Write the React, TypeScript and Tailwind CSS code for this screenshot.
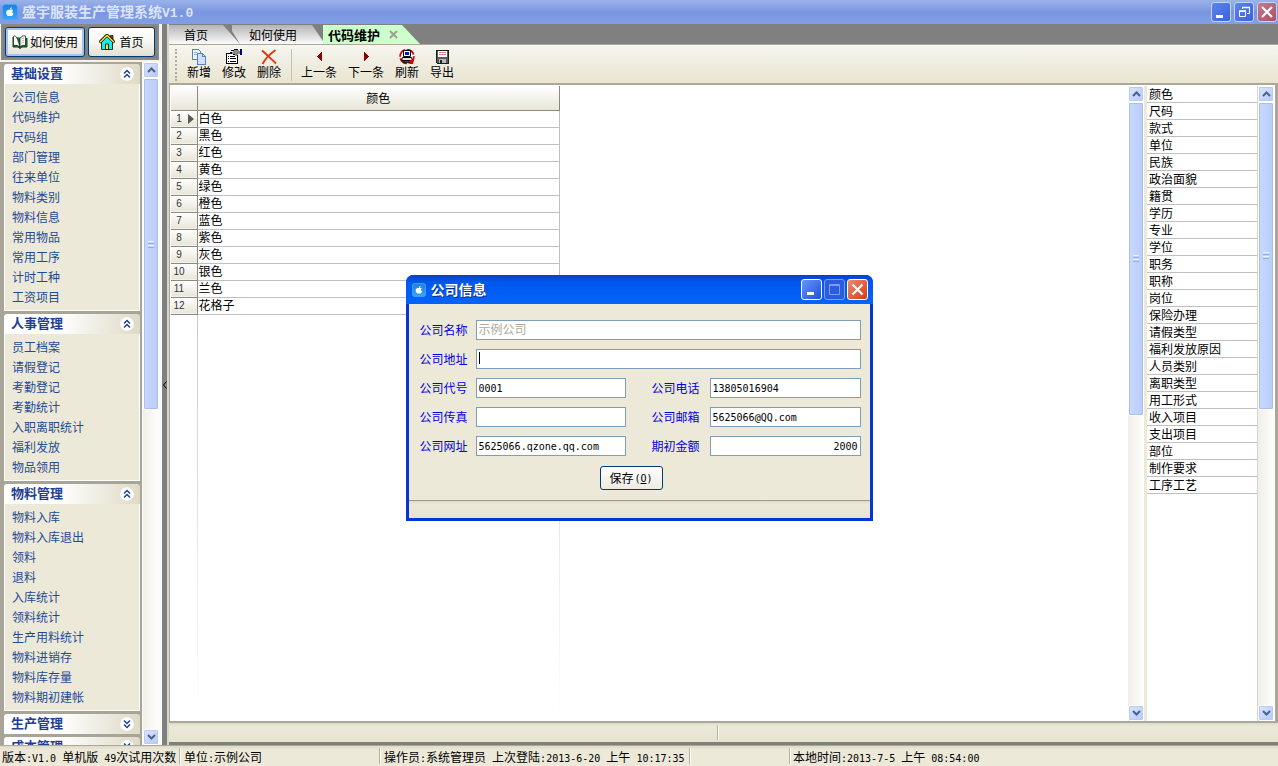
import React from 'react';

const MONO = "font-['DejaVu_Sans_Mono','Noto_Sans_CJK_SC',monospace] text-[10px]";

/* Sets Latin runs in a narrow monospace beside 12px Chinese characters. */
function Mixed({ text }: { text: string }) {
  const parts = text.match(/[\x20-\x7e]+|[^\x20-\x7e]+/g) ?? [];
  return (
    <span className="whitespace-pre">
      {parts.map((p, i) =>
        /^[\x20-\x7e]/.test(p) ? (
          <span key={i} className={MONO}>{p}</span>
        ) : (
          <React.Fragment key={i}>{p}</React.Fragment>
        ),
      )}
    </span>
  );
}

function AppIcon({ className }: { className: string }) {
  return (
    <svg viewBox="0 0 16 16" className={className} aria-hidden="true">
      <defs>
        <linearGradient id="appIcon" x1="0" y1="0" x2="0" y2="1">
          <stop offset="0" stopColor="#1c7fe0" />
          <stop offset="1" stopColor="#35a6f8" />
        </linearGradient>
      </defs>
      <rect x="0.5" y="0.5" width="15" height="15" rx="3" fill="url(#appIcon)" stroke="#4aa5f2" />
      <path
        d="M8 6c1-.8 2.400-.6 3.100.4-1.200.8-1.100 2.600.3 3.200-.4 1.200-1.100 2.400-2 2.400-.6 0-.8-.3-1.500-.3s-.9.3-1.500.3C5.200 12 4.200 10 4.200 8.400 4.200 6.300 6 5.200 8 6zM7.900 5.600c0-1.300.8-2.200 1.900-2.300.1 1.200-.8 2.200-1.900 2.300z"
        fill="#fff"
      />
    </svg>
  );
}

type IconProps = { name: string };

function ToolIcon({ name }: IconProps) {
  return (
    <svg viewBox="0 0 16 16" className="size-4 shrink-0" aria-hidden="true" shapeRendering="crispEdges">
      {name === 'new' && (
        <g fill="#eaf2ff" stroke="#5b7fc0">
          <path d="M1.500.5h6l2 2v8h-8z" />
          <path d="M3 3.500h3M3 5.500h3" stroke="#9bb5e0" />
          <path d="M6.500 4.500h5l3 3v8h-8z" fill="#cfe0fa" />
          <path d="M11.500 4.500v3h3" fill="none" />
        </g>
      )}
      {name === 'edit' && (
        <g>
          <path d="M.5 4.500h11v10H.5z" fill="#fff" stroke="#000" />
          <path d="M2 7.500h1M4 7.500h5M2 9.500h1M4 9.500h6M2 12.500h1M4 12.500h6" stroke="#000" />
          <path d="M5 1h7l2 1v3h-2l-1 2H9L7 5 4 4V3h3z" fill="#8a8a8a" />
          <path d="M5 1.500h3M8 .5h4M4 3.500h2M7 5.500h2" stroke="#000" />
          <path d="M14 0h2v6h-2z" fill="#000080" />
        </g>
      )}
      {name === 'delete' && (
        <path
          d="M1 1.500C5 5 10 10 15 14.500M14.500 1C9 5 4 10 1.500 15"
          stroke="#e8320c"
          strokeWidth="1.800"
          fill="none"
          shapeRendering="auto"
        />
      )}
      {name === 'prev' && <path d="M11 3v9L6 7.500z" fill="#8b0000" />}
      {name === 'next' && <path d="M6 3v9l5-4.500z" fill="#8b0000" />}
      {name === 'refresh' && (
        <g shapeRendering="auto">
          <circle cx="8" cy="7.500" r="6.800" fill="#fff" stroke="#d80000" strokeWidth="1.800" strokeDasharray="9 1.500" />
          <path d="M4.500 1.500h7v6h-7z" fill="#fff" stroke="#000" />
          <path d="M6 3h4v3H6z" fill="#0018c8" />
          <path d="M3.500 8.500h9l1 3h-11z" fill="#ddd" stroke="#000" />
          <path d="M4 13h7" stroke="#000" strokeWidth="1.500" />
          <path d="M11 11h4l-1 4h-3z" fill="#d80000" />
        </g>
      )}
      {name === 'export' && (
        <g>
          <path d="M2.500 1.500h12v13h-11l-1-1z" fill="#5a5a5a" stroke="#1c1c1c" />
          <path d="M4 2h9v6H4z" fill="#fff" />
          <path d="M5 3.500h7M5 5.500h7" stroke="#e08080" />
          <path d="M5 10h7v4H5z" fill="#b8b8b8" />
          <path d="M6 11h2v3H6z" fill="#222" />
        </g>
      )}
    </svg>
  );
}

function BookIcon() {
  return (
    <svg viewBox="0 0 16 16" className="size-4" aria-hidden="true">
      <path d="M1 3v10h5l2 1.500 2-1.500h5V4" fill="#0a7a1c" stroke="#064d10" />
      <path d="M1.500 2.500C3 1 5 1.500 8 13 6 11.500 4 11 1.500 11.500z" fill="#fff" stroke="#222" strokeWidth=".8" />
      <path d="M8 13V4.500C9.500 2 11.500 1.500 13.500 2v9.500C11 11 9.500 11.500 8 13z" fill="#fff" stroke="#222" strokeWidth=".8" />
      <path d="M9.500 5l2.500-.8M9.500 7l2.500-.8M9.500 9l2.500-.8" stroke="#999" strokeWidth=".7" />
    </svg>
  );
}

function HomeIcon() {
  return (
    <svg viewBox="0 0 16 16" className="size-4" aria-hidden="true">
      <path d="M11.500 1.500h2.500v5l-2.500-2z" fill="#e02020" stroke="#000" strokeWidth=".7" />
      <path d="M2.500 8v7.500h11V8L8 2.500z" fill="#18e8f0" stroke="#000" strokeWidth=".8" />
      <path d="M.5 8.500L8 1l7.500 7.500" fill="none" stroke="#000" strokeWidth="2.800" />
      <path d="M1 8.300L8 1.400l7 6.900" fill="none" stroke="#f0e020" strokeWidth="1.600" />
      <path d="M6.500 10h3v5.500h-3z" fill="#ffe020" stroke="#000" strokeWidth=".8" />
    </svg>
  );
}

function Chevrons({ down = false }: { down?: boolean }) {
  return (
    <svg viewBox="0 0 14 14" className="size-[14px]" aria-hidden="true">
      <circle cx="7" cy="7" r="6.800" fill="#fff" />
      <path
        d={down ? 'M4 3.500l3 3 3-3M4 7.500l3 3 3-3' : 'M4 6.500l3-3 3 3M4 10.500l3-3 3 3'}
        fill="none"
        stroke="#1f4092"
        strokeWidth="1.500"
      />
    </svg>
  );
}

function ScrollButton({ down = false }: { down?: boolean }) {
  return (
    <button
      type="button"
      aria-label={down ? '向下滚动' : '向上滚动'}
      className="flex h-4 w-full shrink-0 items-center justify-center rounded-[2px] border border-white bg-linear-to-br from-[#dce6fe] to-[#b4c9fa] shadow-[0_0_0_1px_#b9cbf3_inset]"
    >
      <svg viewBox="0 0 9 6" className="h-[6px] w-[9px]" aria-hidden="true">
        <path d={down ? 'M1 1l3.500 3.500L8 1' : 'M1 5l3.500-3.500L8 5'} fill="none" stroke="#4d6185" strokeWidth="2" />
      </svg>
    </button>
  );
}

function ScrollBar({ thumb }: { thumb: string }) {
  return (
    <div className="flex w-4 shrink-0 flex-col bg-linear-to-r from-[#f0efe9] to-[#fefefb]">
      <ScrollButton />
      <div className="min-h-0 flex-1">
        <div
          className={`flex items-center justify-center rounded-[2px] border border-white bg-linear-to-r from-[#c9d8fc] to-[#b9cdfa] shadow-[inset_0_0_0_1px_#a9bff0] ${thumb}`}
        >
          <div className="flex flex-col gap-px">
            <i className="h-px w-[6px] bg-[#eef4fe]" />
            <i className="h-px w-[6px] bg-[#8cb0f8]" />
            <i className="h-px w-[6px] bg-[#eef4fe]" />
            <i className="h-px w-[6px] bg-[#8cb0f8]" />
          </div>
        </div>
      </div>
      <ScrollButton down />
    </div>
  );
}

const sections = [
  {
    title: '基础设置',
    items: ['公司信息', '代码维护', '尺码组', '部门管理', '往来单位', '物料类别', '物料信息', '常用物品', '常用工序', '计时工种', '工资项目'],
  },
  { title: '人事管理', items: ['员工档案', '请假登记', '考勤登记', '考勤统计', '入职离职统计', '福利发放', '物品领用'] },
  {
    title: '物料管理',
    items: ['物料入库', '物料入库退出', '领料', '退料', '入库统计', '领料统计', '生产用料统计', '物料进销存', '物料库存量', '物料期初建帐'],
  },
  { title: '生产管理', items: [] },
  { title: '成本管理', items: [] },
];

const colours = ['白色', '黑色', '红色', '黄色', '绿色', '橙色', '蓝色', '紫色', '灰色', '银色', '兰色', '花格子'];

const categories = [
  '颜色', '尺码', '款式', '单位', '民族', '政治面貌', '籍贯', '学历', '专业', '学位', '职务', '职称',
  '岗位', '保险办理', '请假类型', '福利发放原因', '人员类别', '离职类型', '用工形式', '收入项目',
  '支出项目', '部位', '制作要求', '工序工艺',
];

const toolsLeft = [
  { icon: 'new', label: '新增' },
  { icon: 'edit', label: '修改' },
  { icon: 'delete', label: '删除' },
];
const toolsRight = [
  { icon: 'prev', label: '上一条' },
  { icon: 'next', label: '下一条' },
  { icon: 'refresh', label: '刷新' },
  { icon: 'export', label: '导出' },
];

function ToolButton({ icon, label }: { icon: string; label: string }) {
  return (
    <button type="button" className="flex shrink-0 flex-col items-center leading-[14px] whitespace-nowrap">
      <ToolIcon name={icon} />
      {label}
    </button>
  );
}

function TitleBar() {
  const btn = 'flex size-5 items-center justify-center rounded-[3px] border border-[#c5d3f5]';
  return (
    <header className="flex h-6 shrink-0 items-center bg-linear-to-b from-[#9ab3ea] via-[#7b96df] to-[#809fe6] pr-px pl-[2px]">
      <AppIcon className="size-4" />
      <h1 className="ml-1 flex-1 truncate text-[14px] leading-5 font-bold text-[#dbe5f9]">
        盛宇服装生产管理系统
        <span className="font-['Liberation_Mono',monospace] text-[13px]">V1.0</span>
      </h1>
      <div className="flex gap-[3px]">
        <button type="button" aria-label="最小化" className={`${btn} bg-linear-to-br from-[#5d84ee] to-[#3a62dc]`}>
          <svg viewBox="0 0 14 14" className="size-[14px]"><path d="M2 10h7v3H2z" fill="#fff" /></svg>
        </button>
        <button type="button" aria-label="还原" className={`${btn} bg-linear-to-br from-[#5d84ee] to-[#3a62dc]`}>
          <svg viewBox="0 0 14 14" className="size-[14px]">
            <path d="M5.500 4V2.500h7v6H10M2.500 6.500h6v5h-6z" fill="none" stroke="#fff" />
            <path d="M5 2.500h8M2 6h7" stroke="#fff" strokeWidth="1.500" />
          </svg>
        </button>
        <button type="button" aria-label="关闭" className={`${btn} bg-linear-to-br from-[#c87a8c] to-[#a85068]`}>
          <svg viewBox="0 0 14 14" className="size-[14px]"><path d="M2 2l10 10M12 2L2 12" stroke="#fff" strokeWidth="2.200" /></svg>
        </button>
      </div>
    </header>
  );
}

function Sidebar() {
  const big = 'flex h-[30px] items-center justify-center rounded-[3px] border border-[#003c74] bg-linear-to-b from-white via-[#f7f6f1] to-[#e3dfd2]';
  return (
    <aside className="flex w-[162px] shrink-0 flex-col bg-[#f4f3ee]">
      <div className="mr-[3px] ml-px flex h-9 shrink-0 items-center gap-[3px] border-2 border-[#8a8a86] bg-[#808080] px-[2px]">
        <button type="button" className={`${big} w-20 gap-[2px] shadow-[inset_0_0_0_2px_#a5c3f0]`}>
          <BookIcon />如何使用
        </button>
        <button type="button" className={`${big} flex-1 gap-[4px]`}>
          <HomeIcon />首页
        </button>
      </div>
      <div className="flex min-h-0 flex-1 pt-[2px]">
        <nav className="flex min-w-0 flex-1 flex-col gap-[3px] overflow-hidden bg-[#a8a598] pt-[2px] pr-[2px] pl-1">
          {sections.map((s, i) => (
            <section key={s.title} className="shrink-0 last:min-h-0 last:shrink last:overflow-hidden">
              <button
                type="button"
                className="flex h-5 w-full items-center justify-between rounded-t-[3px] bg-linear-to-r from-white from-40% to-[#dedac6] pr-[6px] pl-[7px] text-[13px] leading-[18px] font-bold text-[#1f4092]"
              >
                <span className="h-5">{s.title}</span>
                <Chevrons down={i > 2} />
              </button>
              {s.items.length > 0 && (
                <ul className="border border-t-0 border-white bg-[#ece9d8] pt-[4px] pb-[2px] pl-[7px]">
                  {s.items.map((item) => (
                    <li key={item} className="h-5 leading-[18px]">
                      <a href="#" className="text-[#1f4a96]">{item}</a>
                    </li>
                  ))}
                </ul>
              )}
            </section>
          ))}
        </nav>
        <div className="flex w-[20px] bg-[#fbfbf8] pl-px">
          <ScrollBar thumb="h-[51%]" />
        </div>
      </div>
    </aside>
  );
}

function Tabs() {
  const tab = 'h-[19px] shrink-0 text-left leading-[19px]';
  return (
    <div className="flex h-5 shrink-0 items-end bg-[#808080]">
      <button
        type="button"
        className={`${tab} -mr-2 w-[71px] bg-linear-to-b from-[#b4b4b4] to-[#fcfcfc] pl-[15px] [clip-path:polygon(0_0,54px_0,100%_100%,0_100%)]`}
      >
        首页
      </button>
      <button
        type="button"
        className={`${tab} -mr-[2px] w-[93px] bg-linear-to-b from-[#b4b4b4] to-[#fcfcfc] pl-[17px] [clip-path:polygon(0_0,80px_0,100%_100%,8px_100%,0_6px)]`}
      >
        如何使用
      </button>
      <div className={`${tab} z-10 flex w-[97px] items-center bg-[#ccffcc] pl-[5px] [clip-path:polygon(0_0,79px_0,100%_100%,0_100%)]`}>
        <button type="button" className="text-[13px] leading-[19px] font-bold">代码维护</button>
        <button type="button" aria-label="关闭标签" className="ml-[9px]">
          <svg viewBox="0 0 9 9" className="size-[9px]"><path d="M1 1l7 7M8 1L1 8" stroke="#a0a090" strokeWidth="2" /></svg>
        </button>
      </div>
    </div>
  );
}

function ColourGrid() {
  const rowHead = 'border-r border-[#8c8a80] bg-linear-to-b from-white to-[#e8e5d8]';
  return (
    <div className="flex min-w-0 flex-1 flex-col overflow-hidden bg-white">
      <table className="w-[389px] table-fixed border-collapse">
        <colgroup>
          <col className="w-[26px]" />
          <col />
        </colgroup>
        <thead>
          <tr className="h-6 border-b border-[#8c8a80]">
            <th aria-label="行号" className={rowHead} />
            <th className={`${rowHead} text-center font-normal`}>颜色</th>
          </tr>
        </thead>
        <tbody>
          {colours.map((c, i) => (
            <tr key={c} className="h-[17px]">
              <th className={`${rowHead} border-b p-0 font-normal`}>
                <div className="flex h-4 items-center">
                  <span className="w-4 text-center font-['Liberation_Sans',sans-serif] text-[10px] leading-4 text-[#333]">{i + 1}</span>
                  {i === 0 && (
                    <svg viewBox="0 0 6 10" className="ml-px h-[10px] w-[6px]"><path d="M0 0l6 5-6 5z" fill="#5a5850" /></svg>
                  )}
                </div>
              </th>
              <td className="border-r border-b border-[#c0c0c0] p-0 pl-px align-top leading-[14px]">{c}</td>
            </tr>
          ))}
        </tbody>
      </table>
      <div className="flex min-h-0 w-[389px] flex-1 justify-end">
        <div className="flex w-[363px] justify-between">
          <i className="w-px bg-linear-to-b from-[#c8c8c8] to-white" />
          <i className="w-px bg-linear-to-b from-[#d0d0d0] to-white" />
        </div>
      </div>
    </div>
  );
}

const fieldBox = 'h-5 w-full min-w-0 border border-[#7f9db9] bg-white px-[2px] outline-none';

function Field({ id, label, value, right }: { id: string; label: string; value: string; right?: boolean }) {
  return (
    <>
      <label htmlFor={id} className="leading-5 text-[#0000e0]">{label}</label>
      <input id={id} defaultValue={value} className={`${fieldBox} ${MONO} ${right ? 'text-right' : ''}`} />
    </>
  );
}

function CompanyDialog() {
  const btn = 'flex size-[21px] items-center justify-center rounded-[3px] border';
  return (
    <div
      role="dialog"
      aria-labelledby="dialog-title"
      className="absolute inset-x-0 top-[275px] z-20 mx-auto w-[467px] rounded-t-[8px] border-x-[3px] border-b-[3px] border-[#0436d4] bg-[#0436d4]"
    >
      <div className="-mx-[3px] flex h-[29px] items-center rounded-t-[7px] bg-linear-to-b from-[#0a3fc8] via-[#0058ee] via-25% to-[#0364fc] pr-[5px] pl-[6px]">
        <AppIcon className="size-[14px]" />
        <h2 id="dialog-title" className="ml-[5px] flex-1 text-[14px] font-bold text-white [text-shadow:1px_1px_0_#0a2a80]">公司信息</h2>
        <div className="flex gap-[2px]">
          <button type="button" aria-label="最小化" className={`${btn} border-white bg-linear-to-br from-[#6a94f4] to-[#1a4fe0]`}>
            <svg viewBox="0 0 15 15" className="size-[15px]"><path d="M3 10h7v3H3z" fill="#fff" /></svg>
          </button>
          <button type="button" disabled aria-label="最大化" className={`${btn} border-[#7d9df0] bg-[#2a5ce0]`}>
            <svg viewBox="0 0 15 15" className="size-[15px]">
              <path d="M2.500 2.500h10v10h-10zM2 3.500h11" fill="none" stroke="#7f9cee" />
            </svg>
          </button>
          <button type="button" aria-label="关闭" className={`${btn} border-white bg-linear-to-br from-[#f08a68] to-[#d03a10]`}>
            <svg viewBox="0 0 15 15" className="size-[15px]"><path d="M2.500 2.500l10 10M12.500 2.500l-10 10" stroke="#fff" strokeWidth="2.200" /></svg>
          </button>
        </div>
      </div>
      <form className="bg-[#ece9d8]" onSubmit={(e) => e.preventDefault()}>
        <div className="grid grid-cols-[56px_150px_26px_58px_1fr] gap-y-[9px] pt-4 pr-[9px] pl-[11px]">
          <label htmlFor="name" className="leading-5 text-[#0000e0]">公司名称</label>
          <input id="name" disabled defaultValue="示例公司" className={`${fieldBox} col-span-4 pb-[3px] text-[12px] text-[#aca899]`} />
          <label htmlFor="address" className="leading-5 text-[#0000e0]">公司地址</label>
          <div className="relative col-span-4 flex">
            <input id="address" defaultValue="" className={`${fieldBox} caret-transparent`} />
            <i className="absolute top-[3px] left-[3px] h-3 w-px bg-black" />
          </div>
          <Field id="code" label="公司代号" value="0001" />
          <span />
          <Field id="phone" label="公司电话" value="13805016904" />
          <Field id="fax" label="公司传真" value="" />
          <span />
          <Field id="mail" label="公司邮箱" value="5625066@QQ.com" />
          <Field id="site" label="公司网址" value="5625066.qzone.qq.com" />
          <span />
          <Field id="amount" label="期初金额" value="2000" right />
        </div>
        <div className="flex justify-center py-[10px] pr-4">
          <button
            type="submit"
            className="flex h-6 w-[63px] items-center justify-center gap-px rounded-[3px] border border-[#003c74] bg-linear-to-b from-white to-[#eceae2]"
          >
            保存<span className={MONO}>(<u>O</u>)</span>
          </button>
        </div>
        <div className="h-[18px] border-t border-[#9c9a8c] bg-linear-to-b from-[#dedbc9] via-[#ece9d8] via-20% to-[#e6e3d0]" />
      </form>
    </div>
  );
}

export default function App() {
  const cell = 'shrink-0 overflow-hidden border-r border-[#b5b2a2] shadow-[1px_0_0_#fff] pl-[2px]';
  return (
    <div className="relative flex h-screen flex-col overflow-hidden bg-[#ece9d8] font-['Noto_Sans_CJK_SC',sans-serif] text-[12px] text-black">
      <TitleBar />
      <div className="flex min-h-0 flex-1">
        <Sidebar />
        <button type="button" aria-label="折叠侧栏" className="flex w-[5px] shrink-0 items-center justify-center bg-[#808080]">
          <svg viewBox="0 0 4 8" className="h-2 w-1"><path d="M3.500.5L.5 4l3 3.500" fill="none" stroke="#000" /></svg>
        </button>
        <main className="flex min-w-0 flex-1 flex-col border-l-2 border-[#d8d6ca]">
          <Tabs />
          <div className="flex h-10 shrink-0 items-start border-y border-[#aca899] bg-linear-to-b from-[#f6f5ef] to-[#e9e5d1] pt-1 pl-[6px]">
            <div className="mr-[9px] h-8 w-[3px] border-l-2 border-dotted border-[#b0ad9c]" />
            <div className="flex gap-[11px]">
              {toolsLeft.map((t) => <ToolButton key={t.label} {...t} />)}
            </div>
            <i className="mr-[9px] ml-[10px] h-8 w-px bg-[#c5c2b0]" />
            <div className="flex gap-[11px]">
              {toolsRight.map((t) => <ToolButton key={t.label} {...t} />)}
            </div>
          </div>
          <div className="flex min-h-0 flex-1 border-t border-r-[3px] border-b-2 border-l border-[#aca899] bg-white pt-px pl-px">
            <ColourGrid />
            <ScrollBar thumb="h-[52%]" />
            <div className="w-[3px] shrink-0 bg-[#ece9d8]" />
            <ul className="w-[111px] shrink-0 overflow-hidden border-r border-[#d8d6ca] bg-white">
              {categories.map((c) => (
                <li key={c} className="h-[17px] border-b border-[#c0c0c0] pl-[2px] leading-[15px]">{c}</li>
              ))}
            </ul>
            <div className="flex pr-px">
              <ScrollBar thumb="h-[51%]" />
            </div>
          </div>
          <div className="flex h-[19px] shrink-0 bg-linear-to-b from-[#dedbc9] via-[#ece9d8] via-20% to-[#e6e3d0] py-[2px]">
            <div className="w-[549px] border-r border-[#b5b2a2] shadow-[1px_0_0_#fff]" />
          </div>
          <div className="h-[3px] shrink-0 bg-[#808078]" />
        </main>
      </div>
      <footer className="flex h-[21px] shrink-0 border-t border-[#aca899] bg-linear-to-b from-[#dedbc9] via-[#ece9d8] via-20% to-[#ece9d8] py-[2px] leading-[18px]">
        <div className={`${cell} w-[180px]`}><Mixed text="版本:V1.0 单机版 49次试用次数" /></div>
        <div className={`${cell} w-[200px] pl-[4px]`}><Mixed text="单位:示例公司" /></div>
        <div className={`${cell} w-[310px] pl-[4px]`}><Mixed text="操作员:系统管理员 上次登陆:2013-6-20 上午 10:17:35" /></div>
        <div className={`${cell} w-[100px]`} />
        <div className="flex-1 overflow-hidden pl-[3px]"><Mixed text="本地时间:2013-7-5 上午 08:54:00" /></div>
      </footer>
      <CompanyDialog />
    </div>
  );
}
